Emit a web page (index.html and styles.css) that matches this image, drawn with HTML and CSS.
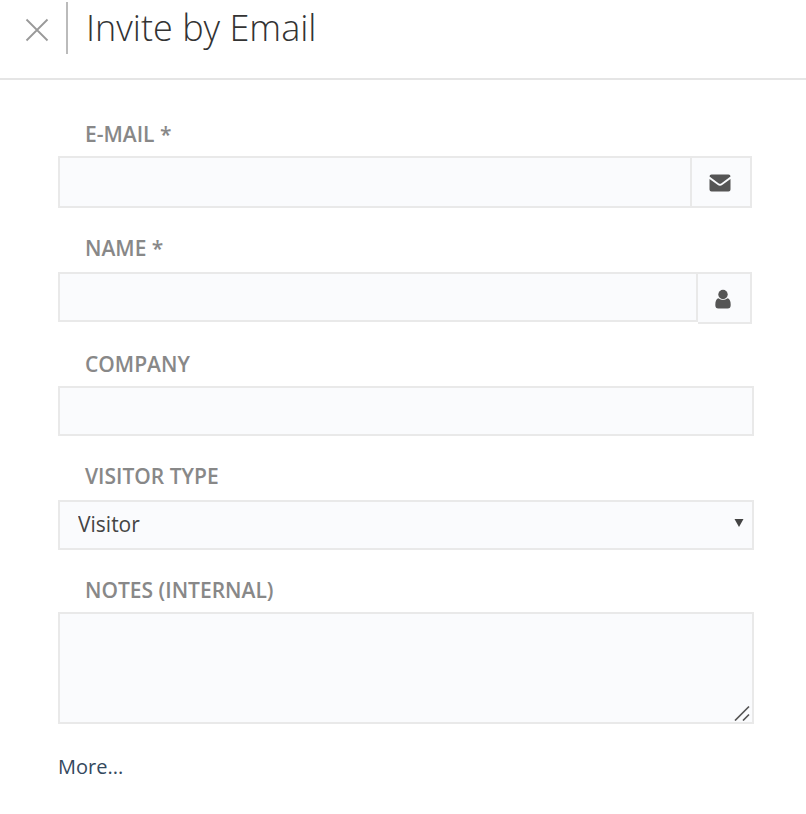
FILE: index.html
```
<!DOCTYPE html>
<html lang="en">
<head>
    <meta charset="UTF-8">
    <meta name="viewport" content="width=device-width, initial-scale=1.0">
    <title>Invite by Email</title>
    <link rel="stylesheet" href="styles.css">
</head>
<body>
    <header class="header">
        <button type="button" class="close" aria-label="Close">
            <svg width="24" height="24" viewBox="0 0 24 24"><path d="M1.5 1.5l21 21M22.5 1.5l-21 21" fill="none" stroke="#999" stroke-width="1.8"/></svg>
        </button>
        <h1>Invite by Email</h1>
    </header>

    <form class="invite-form">
        <div class="form-group">
            <label for="email">E-MAIL *</label>
            <div class="input-group">
                <input type="email" id="email" name="email" class="tall" required>
                <span class="addon addon-email">
                    <svg width="22" height="18" viewBox="0 0 22 18"><path d="M2.5 0.5h17q2 0 2 2L12.5 9.3q-1.500 1-3 0L0.5 2.5q0-2 2-2zM0.5 5l8 5.800q2.500 1.700 5 0l8-5.800v10.500q0 2-2 2h-17q-2 0-2-2z" fill="#555"/></svg>
                </span>
            </div>
        </div>

        <div class="form-group">
            <label for="name" class="spaced">NAME *</label>
            <div class="input-group">
                <input type="text" id="name" name="name" required>
                <span class="addon addon-name">
                    <svg width="16" height="20" viewBox="0 0 16 20"><circle cx="8" cy="5.5" r="4.700" fill="#555"/><path d="M3.3 9.300q4.700 3.600 9.400 0Q15.700 10.200 15.700 16q0 3.500-3 3.500H3.300q-3 0-3-3.500 0-5.800 3-6.700z" fill="#555"/></svg>
                </span>
            </div>
        </div>

        <div class="form-group wide">
            <label for="company">COMPANY</label>
            <input type="text" id="company" name="company">
        </div>

        <div class="form-group wide">
            <label for="visitor_type" class="spaced">VISITOR TYPE</label>
            <div class="select-wrap">
                <select id="visitor_type" name="visitor_type">
                    <option value="visitor">Visitor</option>
                </select>
                <svg class="arrow" width="10" height="8" viewBox="0 0 10 8"><path d="M0.5 0h9L5 8z" fill="#444"/></svg>
            </div>
        </div>

        <div class="form-group wide">
            <label for="notes">NOTES (INTERNAL)</label>
            <div class="textarea-wrap">
                <textarea id="notes" name="notes"></textarea>
                <svg class="grip" width="16" height="16" viewBox="0 0 16 16"><path d="M1 15.5L15 1.5M9 15.5l6-6" fill="none" stroke="#555" stroke-width="1.7"/></svg>
            </div>
        </div>

        <a href="#" class="more">More...</a>
    </form>
</body>
</html>
```

FILE: styles.css
```
* {
    box-sizing: border-box;
}
body {
    margin: 0;
    background-color: #fff;
    font-family: "Open Sans", sans-serif;
    color: #333;
}
.header {
    display: flex;
    align-items: flex-start;
    padding: 2px 24px 24px;
    border-bottom: 2px solid #e5e5e5;
}
.close {
    display: flex;
    align-items: center;
    height: 52px;
    padding: 4px 17px 0 1px;
    background: none;
    border: none;
    cursor: pointer;
}
h1 {
    margin: 0;
    padding-left: 18px;
    border-left: 2px solid #bbb;
    font-size: 36px;
    font-weight: 300;
    line-height: 52px;
}
.invite-form {
    padding: 39px 54px 24px 58px;
}
.form-group {
    margin-bottom: 25px;
}
.form-group.wide {
    margin-right: -2px;
}
label {
    display: block;
    margin-bottom: 7px;
    padding-left: 27px;
    font-size: 21px;
    font-weight: 600;
    line-height: 30px;
    color: #888;
}
label.spaced {
    margin-bottom: 9px;
}
input,
select,
textarea {
    display: block;
    width: 100%;
    height: 50px;
    padding: 0 18px;
    background-color: #fafbfd;
    border: 2px solid #e9e9e9;
    border-radius: 0;
    font-family: inherit;
    font-size: 21px;
    color: #444;
}
input.tall {
    height: 52px;
}
.input-group {
    display: flex;
    align-items: flex-start;
}
.input-group input {
    flex: 1;
    min-width: 0;
}
.addon {
    display: flex;
    align-items: center;
    justify-content: center;
    height: 52px;
    padding: 2px 2px 0 0;
    background-color: #fafbfd;
    border: 2px solid #e9e9e9;
    border-left: none;
}
.addon-email {
    width: 60px;
}
.addon-name {
    width: 54px;
}
.select-wrap,
.textarea-wrap {
    position: relative;
}
select {
    padding-bottom: 2px;
    -webkit-appearance: none;
    appearance: none;
}
.arrow {
    position: absolute;
    top: 19px;
    right: 10px;
    pointer-events: none;
}
textarea {
    height: 112px;
    padding: 10px 18px;
    resize: none;
}
.grip {
    position: absolute;
    right: 4px;
    bottom: 3px;
    pointer-events: none;
}
.more {
    display: inline-block;
    margin-top: 3px;
    font-size: 20px;
    line-height: 30px;
    color: #34495e;
    text-decoration: none;
}
```
